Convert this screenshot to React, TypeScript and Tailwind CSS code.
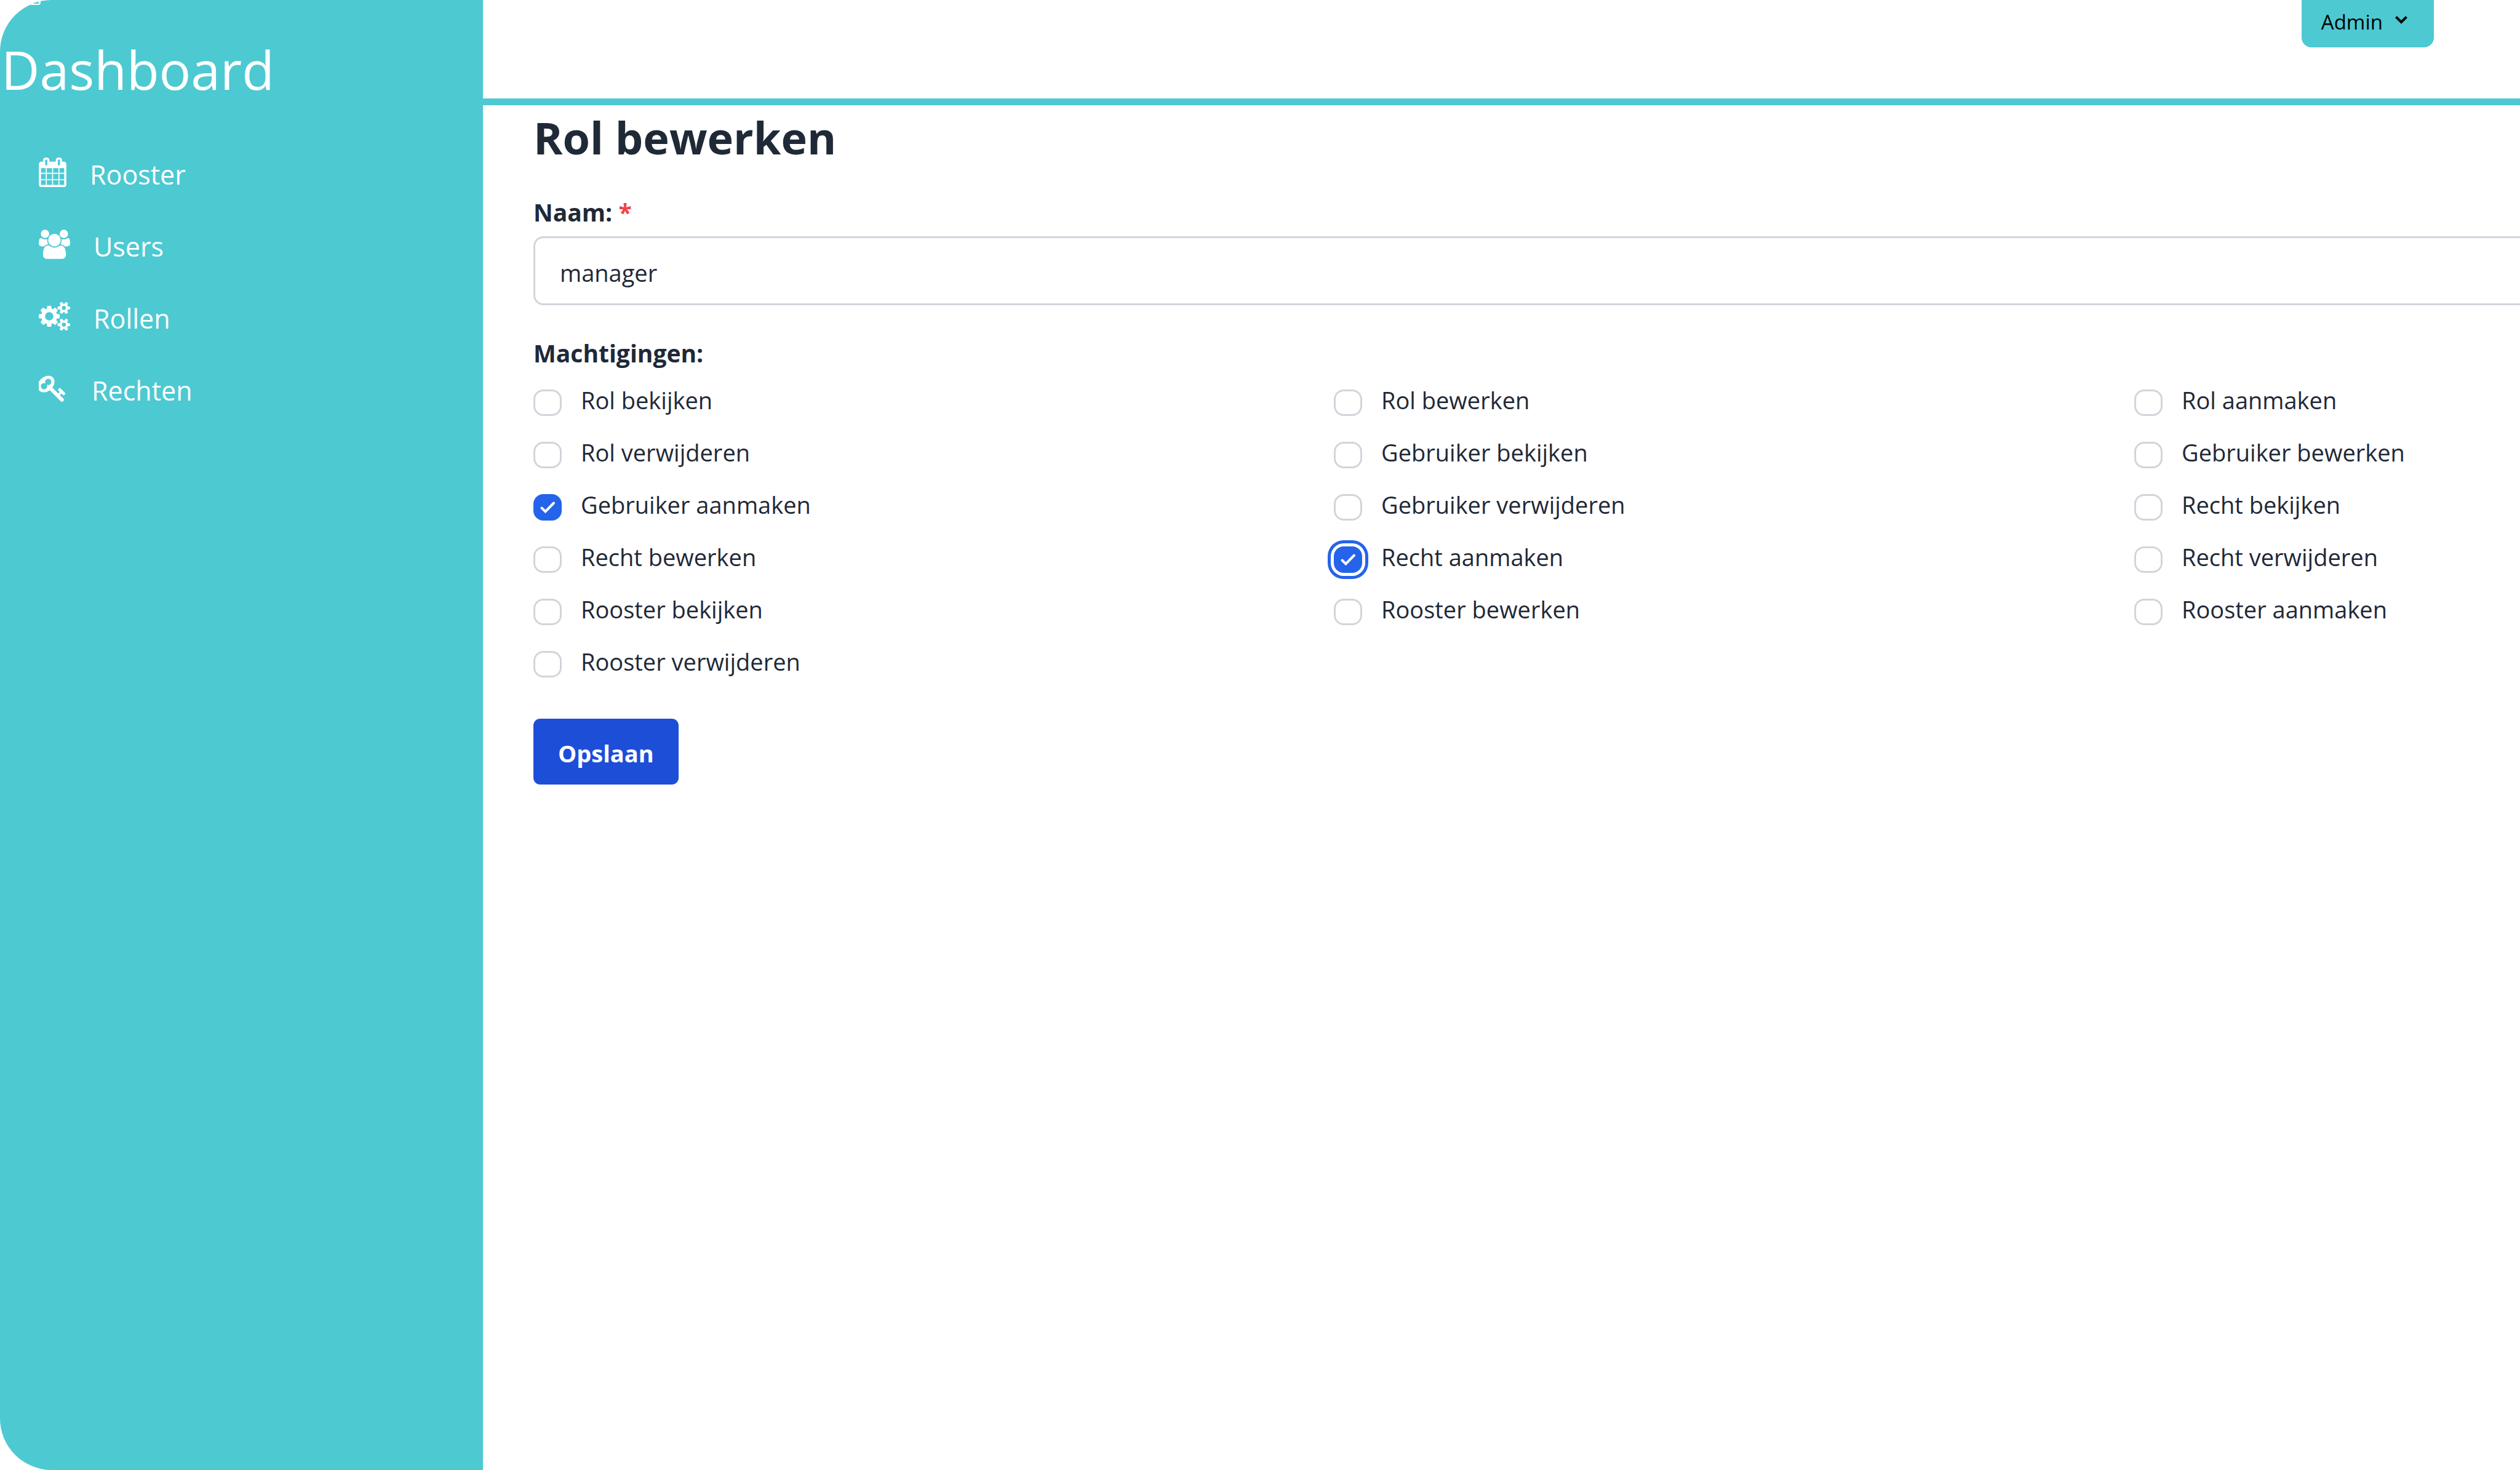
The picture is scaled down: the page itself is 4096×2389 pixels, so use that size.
import { useState } from "react";

const SANS = "font-['Open_Sans','Noto_Sans',sans-serif]";

const navItems = [
  {
    label: "Rooster",
    viewBox: "64 0 1664 1792",
    size: "w-[45px]",
    path: "M192 1664h288v-288h-288v288zm352 0h320v-288h-320v288zm-352-352h288v-320h-288v320zm352 0h320v-320h-320v320zm-352-384h288v-288h-288v288zm736 736h320v-288h-320v288zm-384-736h320v-288h-320v288zm768 736h288v-288h-288v288zm-384-352h320v-320h-320v320zm-352-864v-288q0-13-9.5-22.5t-22.5-9.5h-64q-13 0-22.5 9.5t-9.5 22.5v288q0 13 9.5 22.5t22.5 9.5h64q13 0 22.5-9.5t9.5-22.5zm736 864h288v-320h-288v320zm-384-384h320v-288h-320v288zm384 0h288v-288h-288v288zm32-480v-288q0-13-9.5-22.5t-22.5-9.5h-64q-13 0-22.5 9.5t-9.5 22.5v288q0 13 9.5 22.5t22.5 9.5h64q13 0 22.5-9.5t9.5-22.5zm384-64v1280q0 52-38 90t-90 38h-1408q-52 0-90-38t-38-90v-1280q0-52 38-90t90-38h128v-96q0-66 47-113t113-47h64q66 0 113 47t47 113v96h384v-96q0-66 47-113t113-47h64q66 0 113 47t47 113v96h128q52 0 90 38t38 90z",
  },
  {
    label: "Users",
    viewBox: "-64 0 1920 1792",
    size: "w-[51px]",
    path: "M529 896q-162 5-265 128h-134q-82 0-138-40.5t-56-118.5q0-353 124-353 6 0 43.5 21t97.5 42.5 119 21.5q67 0 133-23-5 37-5 66 0 139 81 256zm1071 637q0 120-73 189.5t-194 69.5h-874q-121 0-194-69.5t-73-189.5q0-53 3.5-103.5t14-109 26.5-108.5 43-97.5 62-81 85.5-53.5 111.5-20q10 0 43 21.5t73 48 107 48 135 21.5 135-21.5 107-48 73-48 43-21.5q61 0 111.5 20t85.5 53.5 62 81 43 97.5 26.5 108.5 14 109 3.5 103.5zm-1024-1277q0 106-75 181t-181 75-181-75-75-181 75-181 181-75 181 75 75 181zm704 384q0 159-112.5 271.5t-271.5 112.5-271.5-112.5-112.5-271.5 112.5-271.5 271.5-112.5 271.5 112.5 112.5 271.5zm576 225q0 78-56 118.5t-138 40.5h-134q-103-123-265-128 81-117 81-256 0-29-5-66 66 23 133 23 59 0 119-21.5t97.5-42.5 43.5-21q124 0 124 353zm-128-609q0 106-75 181t-181 75-181-75-75-181 75-181 181-75 181 75 75 181z",
  },
  {
    label: "Rollen",
    viewBox: "-64 0 1920 1792",
    size: "w-[51px]",
    path: "M832 896q0-106-75-181t-181-75-181 75-75 181 75 181 181 75 181-75 75-181zm768 512q0-52-38-90t-90-38-90 38-38 90q0 53 37.5 90.5t90.5 37.5 90.5-37.5 37.5-90.5zm0-1024q0-52-38-90t-90-38-90 38-38 90q0 53 37.5 90.5t90.5 37.5 90.5-37.5 37.5-90.5zm-384 421v185q0 10-7 19.5t-16 10.5l-155 24q-11 35-32 76 34 48 90 115 7 11 7 20 0 12-7 19-23 30-82.5 89.5t-78.5 59.5q-11 0-21-7l-115-90q-37 19-77 31-11 108-23 155-7 24-30 24h-186q-11 0-20-7.5t-10-17.5l-23-153q-34-10-75-31l-118 89q-7 7-20 7-11 0-21-8-144-133-144-160 0-9 7-19 10-14 41-53t47-61q-23-44-35-82l-152-24q-10-1-17-9.5t-7-19.5v-185q0-10 7-19.5t16-10.5l155-24q11-35 32-76-34-48-90-115-7-11-7-20 0-12 7-20 22-30 82-89t79-59q11 0 21 7l115 90q34-18 77-32 11-108 23-154 7-24 30-24h186q11 0 20 7.5t10 17.5l23 153q34 10 75 31l118-89q8-7 20-7 11 0 21 8 144 133 144 160 0 8-7 19-12 16-42 54t-45 60q23 48 34 82l152 23q10 2 17 10.5t7 19.5zm640 533v140q0 16-149 31-12 27-30 52 51 113 51 138 0 4-4 7-122 71-124 71-8 0-46-47t-52-68q-20 2-30 2t-30-2q-14 21-52 68t-46 47q-2 0-124-71-4-3-4-7 0-25 51-138-18-25-30-52-149-15-149-31v-140q0-16 149-31 13-29 30-52-51-113-51-138 0-4 4-7 4-2 35-20t59-34 30-16q8 0 46 46.5t52 67.5q20-2 30-2t30 2q51-71 92-112l6-2q4 0 124 70 4 3 4 7 0 25-51 138 17 23 30 52 149 15 149 31zm0-1024v140q0 16-149 31-12 27-30 52 51 113 51 138 0 4-4 7-122 71-124 71-8 0-46-47t-52-68q-20 2-30 2t-30-2q-14 21-52 68t-46 47q-2 0-124-71-4-3-4-7 0-25 51-138-18-25-30-52-149-15-149-31v-140q0-16 149-31 13-29 30-52-51-113-51-138 0-4 4-7 4-2 35-20t59-34 30-16q8 0 46 46.5t52 67.5q20-2 30-2t30 2q51-71 92-112l6-2q4 0 124 70 4 3 4 7 0 25-51 138 17 23 30 52 149 15 149 31z",
  },
  {
    label: "Rechten",
    viewBox: "64 0 1792 1792",
    size: "w-12",
    path: "M832 512q0-80-56-136t-136-56-136 56-56 136q0 42 19 83-41-19-83-19-80 0-136 56t-56 136 56 136 136 56 136-56 56-136q0-42-19-83 41 19 83 19 80 0 136-56t56-136zm851 704q0 17-49 66t-66 49q-9 0-28.5-16t-36.5-33-38.5-40-24.5-26l-96 96 220 220q28 28 28 68 0 42-39 81t-81 39q-40 0-68-28l-671-671q-176 131-365 131-163 0-265.5-102.5t-102.5-265.5q0-160 95-313t248-248 313-95q163 0 265.5 102.5t102.5 265.5q0 189-131 365l355 355 96-96q-3-3-26-24.5t-40-38.5-33-36.5-16-28.5q0-17 49-66t66-49q13 0 23 10 6 6 46 44.5t82 79.5 86.5 86 73 78 28.5 41z",
  },
];

const permissions = [
  "Rol bekijken",
  "Rol bewerken",
  "Rol aanmaken",
  "Rol verwijderen",
  "Gebruiker bekijken",
  "Gebruiker bewerken",
  "Gebruiker aanmaken",
  "Gebruiker verwijderen",
  "Recht bekijken",
  "Recht bewerken",
  "Recht aanmaken",
  "Recht verwijderen",
  "Rooster bekijken",
  "Rooster bewerken",
  "Rooster aanmaken",
  "Rooster verwijderen",
];

const highlighted = "Recht aanmaken";

function Sidebar() {
  return (
    <aside className="relative w-[785px] shrink-0 rounded-l-[84px] bg-[#4dc9d2] text-white">
      <span
        className="absolute top-0 left-[50px] h-2 w-4 rounded-br-[4px] border-r-[3px] border-b-2 border-white"
        aria-hidden="true"
      />
      <h2 className="pt-[47px] pl-0.5 text-[86px] leading-[132px]">Dashboard</h2>
      <nav className="mt-[69px] flex flex-col gap-[45px] pl-[63px]">
        {navItems.map((item) => (
          <a key={item.label} href="#" className="flex items-start gap-[38px] text-[43px] leading-[72px]">
            <svg viewBox={item.viewBox} className={`mt-2 h-12 shrink-0 ${item.size}`} fill="currentColor" aria-hidden="true">
              <path d={item.path} />
            </svg>
            <span>{item.label}</span>
          </a>
        ))}
      </nav>
    </aside>
  );
}

function Permission({ label, checked, onToggle }: { label: string; checked: boolean; onToggle: () => void }) {
  return (
    <label className="flex h-16 items-start gap-[31px]">
      <span className="mt-[11px] grid h-[43px] w-[46px] shrink-0">
        <input
          type="checkbox"
          checked={checked}
          onChange={onToggle}
          className={`col-start-1 row-start-1 h-full w-full appearance-none rounded-[16px] border-[3px] border-[#d1d5db] bg-white checked:border-[#2563eb] checked:bg-[#2563eb] ${
            label === highlighted ? "ring-5 ring-[#2563eb] ring-offset-5" : ""
          }`}
        />
        {checked && (
          <svg
            viewBox="0 0 46 43"
            className="pointer-events-none col-start-1 row-start-1 h-full w-full"
            fill="none"
            stroke="#fff"
            strokeWidth="4"
            strokeLinecap="round"
            aria-hidden="true"
          >
            <path d="M13.5 22.5l6 6L33 14.5" />
          </svg>
        )}
      </span>
      <span className="text-[38px] leading-[56px]">{label}</span>
    </label>
  );
}

export default function App() {
  const [name, setName] = useState("manager");
  const [selected, setSelected] = useState<string[]>(["Gebruiker aanmaken", "Recht aanmaken"]);

  const toggle = (label: string) =>
    setSelected((prev) => (prev.includes(label) ? prev.filter((p) => p !== label) : [...prev, label]));

  return (
    <div className={`flex min-h-screen overflow-hidden bg-white text-[#1f2937] ${SANS}`}>
      <Sidebar />
      <div className="min-w-0 flex-1">
        <header className="flex h-[171px] items-start justify-end border-b-[11px] border-[#4dc9d2] pr-[140px]">
          <button
            type="button"
            className="flex h-[77px] items-center gap-[18px] rounded-b-[16px] bg-[#4dc9d2] pr-[41px] pb-1.5 pl-8 text-[33px] text-black"
          >
            Admin
            <svg
              viewBox="0 0 24 16"
              className="mb-2 h-4 w-6"
              fill="none"
              stroke="currentColor"
              strokeWidth="4"
              aria-hidden="true"
            >
              <path d="M3.5 3.5l8.5 8.5 8.5-8.5" />
            </svg>
          </button>
        </header>

        <main className="w-screen pr-[154px] pl-[82px]">
          <h1 className="pt-1 text-[72px] leading-[96px] font-bold">Rol bewerken</h1>
          <form onSubmit={(e) => e.preventDefault()}>
            <label htmlFor="naam" className="mt-[42px] block text-[39px] leading-16 font-bold">
              Naam: <span className="text-[#ef4444]">*</span>
            </label>
            <input
              id="naam"
              type="text"
              value={name}
              onChange={(e) => setName(e.target.value)}
              className="mt-[7px] block h-[112px] w-full rounded-[16px] border-[3px] border-[#d1d5db] bg-white px-10 pt-1.5 text-[38px] outline-none"
            />
            <fieldset className="mt-[46px]">
              <legend className="text-[39px] leading-16 font-bold">Machtigingen:</legend>
              <div className="mt-4 grid grid-cols-3 gap-x-[43px] gap-y-[21px]">
                {permissions.map((label) => (
                  <Permission
                    key={label}
                    label={label}
                    checked={selected.includes(label)}
                    onToggle={() => toggle(label)}
                  />
                ))}
              </div>
            </fieldset>
            <button
              type="submit"
              className="mt-[57px] block h-[107px] rounded-[11px] bg-[#1d4ed8] px-10 pt-1.5 text-[38px] font-bold text-white"
            >
              Opslaan
            </button>
          </form>
        </main>
      </div>
    </div>
  );
}
